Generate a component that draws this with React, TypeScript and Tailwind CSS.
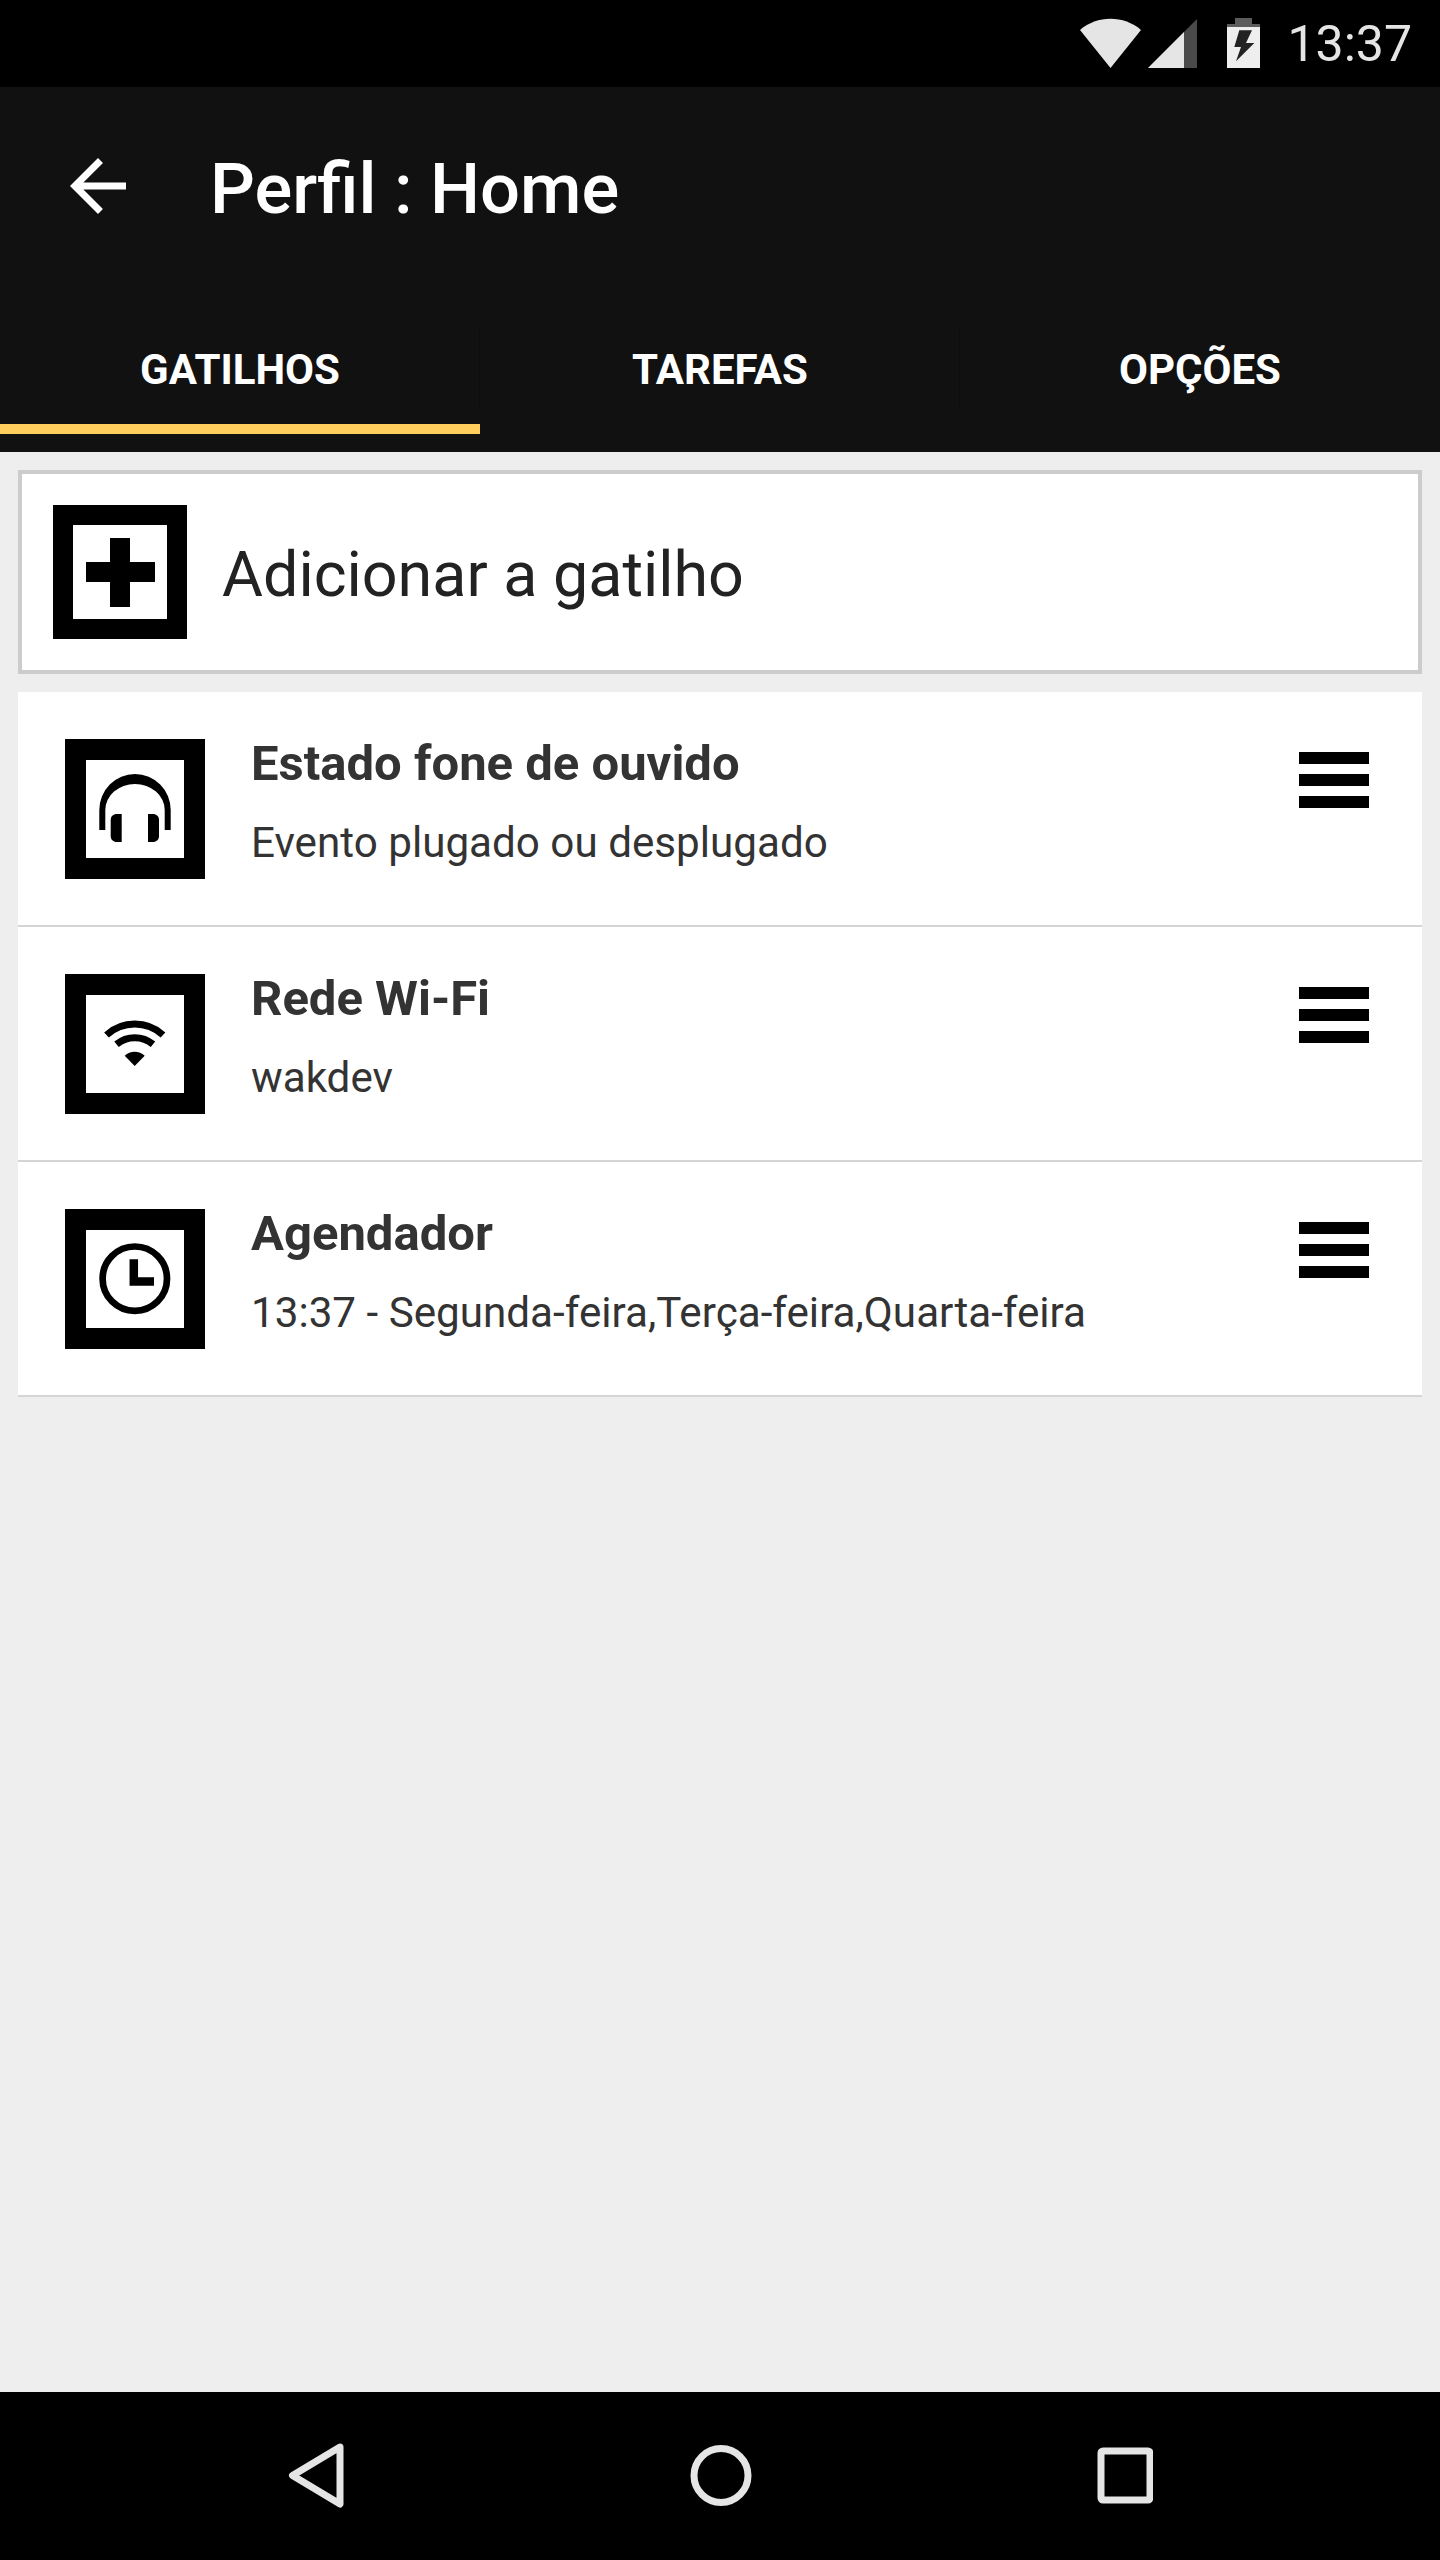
const rows = [
  { title: "Estado fone de ouvido", sub: "Evento plugado ou desplugado", icon: "head" },
  { title: "Rede Wi-Fi", sub: "wakdev", icon: "wifi" },
  { title: "Agendador", sub: "13:37 - Segunda-feira,Terça-feira,Quarta-feira", icon: "clock" },
];

function TaskIcon({ kind }: { kind: string }) {
  return (
    <div className="w-[140px] h-[140px] shrink-0 border-[21px] border-black bg-white">
      <svg viewBox="0 0 98 98" className="w-[98px] h-[98px] block">
        {kind === "head" && (
          <g fill="#000">
            <path d="M13.300 70V50A35.700 36 0 0 1 84.700 50V70H78.700V50A29.700 26 0 0 0 19.300 50V70Z" />
            <path d="M35.700 54V82H31C27 82 24.700 79.500 24.700 76V60C24.700 56.500 27 54 31 54Z" />
            <path d="M62 54V82H66.700C70.700 82 73 79.500 73 76V60C73 56.500 70.700 54 66.700 54Z" />
          </g>
        )}
        {kind === "wifi" && (
          <g fill="none" stroke="#000" strokeWidth="7">
            <path d="M20.500 40A42 42 0 0 1 77 40" />
            <path d="M30.500 49.300A28.500 28.500 0 0 1 67 49.300" />
            <path d="M48.700 71L38.700 60.800A14.300 14.300 0 0 1 58.700 60.800Z" fill="#000" stroke="none" />
          </g>
        )}
        {kind === "clock" && (
          <g fill="none" stroke="#000">
            <circle cx="48.800" cy="48.700" r="32.200" strokeWidth="6.700" />
            <path d="M47.800 29.300V51.600H68" strokeWidth="8.500" />
          </g>
        )}
      </svg>
    </div>
  );
}

function Hamburger() {
  return (
    <div className="w-[70px] mt-[13px] flex flex-col gap-[10px] shrink-0">
      <div className="h-[12px] bg-black" />
      <div className="h-[12px] bg-black" />
      <div className="h-[12px] bg-black" />
    </div>
  );
}

function Divider() {
  return <div className="absolute right-0 top-[16px] w-px h-[81px] bg-[#0e0e0e]" />;
}

export default function App() {
  return (
    <div
      className="w-[1440px] h-[2560px] flex flex-col bg-[#eeeeee] overflow-hidden"
      style={{ fontFamily: "Roboto, sans-serif" }}
    >
      <div className="h-[87px] bg-black flex items-center justify-end pr-[28px] shrink-0">
        <svg viewBox="0 0 180 51" className="w-[180px] h-[51px] mr-[27px]">
          <path d="M0 12C17 -3 44 -3 61 12L30.500 50Z" fill="#e5e5e5" />
          <path d="M68 50L117 1V50Z" fill="#4a4a4a" />
          <path d="M68 50L104 14V50Z" fill="#e5e5e5" />
          <path d="M155 0h17v6h-17z" fill="#5c5c5c" />
          <path d="M147 6h33v3h-33z" fill="#5c5c5c" />
          <path d="M147 9h33v41h-33z" fill="#eeeeee" />
          <path d="M159.300 12.300H172L166 25H174.300L156 43.300L161 29H154.300Z" fill="#222" />
        </svg>
        <span className="text-[50px] leading-[58px] text-[#e5e5e5] mt-[1px]">13:37</span>
      </div>

      <div className="h-[365px] bg-[#111111] flex flex-col shrink-0">
        <div className="h-[224px] flex items-start pt-[57px] pl-[56px]">
          <svg viewBox="0 0 24 24" className="w-[84px] h-[84px] shrink-0" fill="#fff">
            <path d="M20 11H7.830l5.590-5.590L12 4l-8 8 8 8 1.410-1.410L7.830 13H20v-2z" />
          </svg>
          <span className="ml-[70px] mt-[3px] text-[70.500px] leading-[84px] font-medium text-white">Perfil : Home</span>
        </div>
        <div className="flex h-[123px]">
          <div className="relative w-[480px] flex flex-col border-b-[10px] border-[#ffce5c]">
            <div className="flex-1 flex items-center justify-center pt-[3px] text-[42px] font-bold text-white uppercase">Gatilhos</div>
            <Divider />
          </div>
          <div className="relative w-[480px] flex items-center justify-center pb-[7px] text-[42px] font-bold text-white uppercase">
            Tarefas
            <Divider />
          </div>
          <div className="w-[480px] flex items-center justify-center pb-[7px] text-[42px] font-bold text-white uppercase">Opções</div>
        </div>
      </div>

      <div className="flex-1 px-[18px] pt-[18px]">
        <div className="h-[204px] border-[4px] border-[#cccccc] bg-white flex items-center pl-[31px]">
          <div className="w-[134px] h-[134px] border-[20px] border-black flex items-center justify-center relative shrink-0">
            <div className="absolute w-[69px] h-[20px] bg-black" />
            <div className="absolute w-[20px] h-[69px] bg-black" />
          </div>
          <span className="ml-[35px] mt-[6px] text-[62.800px] leading-[74px] text-[#222222]">Adicionar a gatilho</span>
        </div>

        <div className="mt-[18px]">
          {rows.map((r) => (
            <div key={r.title} className="h-[235px] bg-white border-b-2 border-[#d5d5d5] flex items-start pt-[47px] pl-[47px] pr-[53px]">
              <TaskIcon kind={r.icon} />
              <div className="ml-[46px] flex-1 text-[#333333] mt-[-4px]">
                <div className="text-[49px] leading-[58px] font-bold">{r.title}</div>
                <div className="text-[42.200px] leading-[50px] mt-[25px]">{r.sub}</div>
              </div>
              <Hamburger />
            </div>
          ))}
        </div>
      </div>

      <div className="h-[168px] bg-black flex items-center justify-center shrink-0">
        <svg viewBox="0 0 865 68" className="w-[865px] h-[68px]">
          <path d="M52 5L4.500 33.500L52 62Z" fill="none" stroke="#e5e5e5" strokeWidth="7" strokeLinejoin="round" />
          <circle cx="433" cy="33.500" r="27" fill="none" stroke="#e5e5e5" strokeWidth="7" />
          <rect x="813" y="9" width="49" height="49" rx="2" fill="none" stroke="#e5e5e5" strokeWidth="7" />
        </svg>
      </div>
    </div>
  );
}
